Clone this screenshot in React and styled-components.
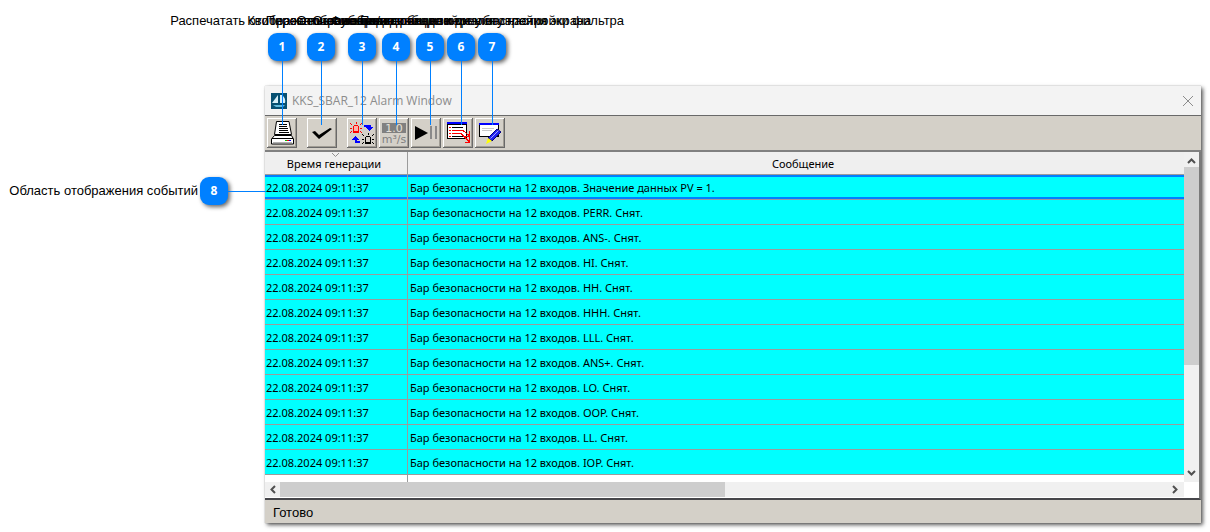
import React from 'react';
import styled, { createGlobalStyle, css } from 'styled-components';

const Global = createGlobalStyle`
  * { box-sizing: border-box; }
  body { margin: 0; background: #fff; color: #000; font-family: "Liberation Sans", Arial, sans-serif; }
`;

const Page = styled.main`
  position: relative;
  display: grid;
  grid-template-columns: 265px minmax(0, 1fr);
  padding: 86px 9px 9px 0;
`;

const Side = styled.aside`
  display: flex;
  align-items: center;
  align-self: start;
  justify-content: flex-end;
  gap: 2px;
  height: 28px;
  margin-top: 91px;
`;

const Caption = styled.span`
  font-size: 13px;
  line-height: 16px;
  white-space: nowrap;
`;

const Badge = styled.span`
  flex: none;
  width: 28px;
  height: 28px;
  border-radius: 9px;
  background: #0080ff;
  box-shadow: 2px 2px 4px rgba(0, 0, 0, 0.6);
  color: #fff;
  font: bold 12px/28px "Open Sans", sans-serif;
  text-align: center;
`;

const SideLine = styled.span`
  position: relative;
  z-index: 2;
  flex: none;
  width: 38px;
  height: 1px;
  margin: 0 -1px 0 -2px;
  background: #0080ff;
`;

const Pin = styled.div`
  position: absolute;
  z-index: 2;
  top: 13px;
  left: ${(p) => p.$x}px;
  width: 0;
  display: flex;
  flex-direction: column;
  align-items: center;
  pointer-events: none;
`;

const PinBadge = styled(Badge)`
  margin-top: 4px;
`;

const PinLine = styled.span`
  flex: none;
  width: 1px;
  height: 64px;
  margin-left: 1px;
  background: #0080ff;
`;

const Window = styled.section`
  display: flex;
  flex-direction: column;
  min-width: 0;
  background: #d4d0c8;
  box-shadow: 2px 2px 4px rgba(0, 0, 0, 0.65), 0 0 1px rgba(0, 0, 0, 0.3);
`;

const TitleBar = styled.header`
  display: flex;
  align-items: center;
  gap: 5px;
  height: 30px;
  padding: 0 6px;
  background: #f3f3f3;
  border-bottom: 1px solid #696969;
`;

const Title = styled.h1`
  flex: 1;
  margin: 0;
  font: 12px/16px "Open Sans", sans-serif;
  color: #8c8c8c;
`;

const CloseButton = styled.button`
  display: flex;
  padding: 0;
  border: 0;
  background: none;
`;

const Toolbar = styled.div`
  display: flex;
  gap: 10px;
  height: 36px;
  padding: 2px;
  border-bottom: 2px solid #808080;
`;

const Group = styled.div`
  display: flex;
  gap: 2px;
`;

const ToolButton = styled.button`
  width: 30px;
  height: 30px;
  padding: 0;
  border: 0;
  background: #d4d0c8;
  box-shadow: inset -1px -1px #696969, inset 1px 1px #fff, inset -2px -2px #a09c94;
  svg { display: block; }
`;

const Viewer = styled.div`
  display: grid;
  grid-template-columns: minmax(0, 1fr) 15px;
  padding-bottom: 1px;
  background: #fff;
  border-right: 2px solid #7a7a7a;
  border-bottom: 2px solid #46464a;
`;

const Table = styled.table`
  width: 100%;
  table-layout: fixed;
  border-collapse: separate;
  border-spacing: 0;
  font: 11px/16px "Noto Sans", sans-serif;
`;

const TimeCol = styled.col`
  width: 143px;
`;

const line = css`
  border-bottom: 1px solid #9b9b9b;
  &:first-child { border-right: 1px solid #9b9b9b; }
`;

const HeadCell = styled.th`
  ${line}
  position: relative;
  height: 23px;
  padding: 2px 4px 0 0;
  background: #efefef;
  font-weight: normal;
  &:last-child { padding: 2px 0 0 14px; }
`;

const SortMark = styled.svg`
  position: absolute;
  top: 0;
  left: 66px;
`;

const Cell = styled.td`
  ${line}
  height: 25px;
  padding: 1px 0 0 1px;
  background: #00ffff;
  white-space: nowrap;
  overflow: hidden;
  &:last-child { padding-left: 2px; }
  ${(p) => p.$selected && css`box-shadow: inset 0 2px #0080ff, inset 0 -2px #0080ff;`}
`;

const TailCell = styled.td`
  height: 7px;
  padding: 0;
  &:first-child { border-right: 1px solid #9b9b9b; }
`;

const VScroll = styled.div`
  display: flex;
  flex-direction: column;
  background: #f0f0f0;
`;

const HScroll = styled.div`
  display: flex;
  background: #f0f0f0;
`;

const Arrow = styled.button`
  display: flex;
  flex: none;
  width: 15px;
  height: 15px;
  padding: 0;
  border: 0;
  background: none;
`;

const Track = styled.div`
  display: flex;
  flex: 1;
  flex-direction: ${(p) => (p.$vertical ? 'column' : 'row')};
`;

const Thumb = styled.div`
  flex: 0 0 ${(p) => p.$size};
  background: #cdcdcd;
`;

const Status = styled.footer`
  height: 23px;
  padding-left: 8px;
  font-size: 13px;
  line-height: 26px;
`;

const Icon = ({ children }) => (
  <svg width="30" height="30" viewBox="0 0 30 30" shapeRendering="crispEdges" aria-hidden="true">{children}</svg>
);

const Printer = () => (
  <Icon>
    <path d="M9.500 3.500h12.500l2.500 13h-17z" fill="#fff" stroke="#000" shapeRendering="auto" />
    <path d="M12 6.500h8M12 8.500h8M12 10.500h9M12 12.500h9M12 14.500h10" stroke="#000" />
    <path d="M7.500 17.500l-3 3.500v5h22v-5l-2-3.500z" fill="#fff" stroke="#000" shapeRendering="auto" />
    <path d="M5 20.500h21" stroke="#000" />
    <path d="M6 24.500h19" stroke="#b0b0b0" />
    <path d="M18 22.500h2" stroke="#00c000" />
    <path d="M20 22.500h2" stroke="#f00000" />
    <path d="M22 22.500h2" stroke="#0000e0" />
  </Icon>
);

const Check = () => (
  <Icon>
    <path d="M5 14l3-1 4 4 11-7 2 1-13 10z" fill="#000" shapeRendering="auto" />
  </Icon>
);

const Lamp = ({ x, y, color, fill }) => (
  <g transform={`translate(${x} ${y})`} stroke={color} fill="none">
    <path d="M3.500 9.500v-5l1-1h3l1 1v5z" fill={fill} />
    <path d="M3 10.500h6M6 0v2M0 1.500h1M1 2.500h1M10 2.500h1M11 1.500h1M0 6.500h2M10 6.500h2M1 9.500h1M0 10.500h1M10 9.500h1M11 10.500h1" />
  </g>
);

const Swap = () => (
  <Icon>
    <Lamp x={3} y={4} color="#ff0000" fill="#ffb0a8" />
    <Lamp x={15} y={15} color="#000" fill="#d4d0c8" />
    <path d="M17 7.500h5.500V10M13 23.500H8.500V21" fill="none" stroke="#0000ff" strokeWidth="2" />
    <path d="M19 9h7l-3.500 4zM5 22h7l-3.500-4z" fill="#0000ff" />
  </Icon>
);

const UnitText = styled.text`
  font: 11px "DejaVu Sans", sans-serif;
`;

const Units = () => (
  <Icon>
    <rect x="3" y="5" width="24" height="10" fill="#808080" />
    <UnitText x="15" y="14" textAnchor="middle" fill="#e4e0d8">1.0</UnitText>
    <UnitText x="15" y="25" textAnchor="middle" fill="#808080">m³/s</UnitText>
  </Icon>
);

const PlayPause = () => (
  <Icon>
    <path d="M4 8l13 7-13 7z" fill="#000" shapeRendering="auto" />
    <path d="M19 8h2v13h-2zM24 8h2v13h-2z" fill="#8a8a8a" />
  </Icon>
);

const ListIcon = () => (
  <Icon>
    <rect x="4.500" y="6.500" width="19" height="14" fill="#fff" stroke="#000" />
    <path d="M4 4h20v2H4z" fill="#0000ff" />
    <path d="M6 9.500h2M6 12.500h2M6 15.500h2M6 18.500h2" stroke="#ff0000" />
    <path d="M9 9.500h11M9 18.500h11" stroke="#000" />
    <path d="M9 12.500h11l6 5M26.500 13v5h-5M9 15.500h9l8 8M26.500 19v5h-5" fill="none" stroke="#ff0000" />
  </Icon>
);

const EditIcon = () => (
  <Icon>
    <rect x="4.500" y="6.500" width="19" height="12" fill="#fff" stroke="#000" />
    <path d="M4 5h20v2H4z" fill="#0000ff" />
    <path d="M7 10.500h12M7 12.500h10" stroke="#c8c8c8" />
    <g shapeRendering="auto">
      <path d="M13 20l9-9 4 3-9 9z" fill="#2020f0" stroke="#000080" />
      <path d="M15.500 20.500l8-8" stroke="#a0a0ff" />
      <path d="M13 20l4 3-6 3z" fill="#ffff00" />
    </g>
  </Icon>
);

const Chevron = ({ d }) => (
  <svg width="15" height="15" aria-hidden="true"><path d={d} fill="none" stroke="#505050" strokeWidth="2" /></svg>
);

const pins = [
  [282, 'Распечатать отображаемые события'],
  [321, 'Квитировать сообщение'],
  [362, 'Переключение типа сообщений'],
  [396, 'Отображение единиц измерения'],
  [430, 'Остановка/возобновление обновления'],
  [461, 'Функция перехода к окну настройки экрана'],
  [492, 'Подключение к диалогу настройки фильтра'],
];

const groups = [
  [['Печать', Printer]],
  [['Квитировать', Check]],
  [['Переключить', Swap], ['Единицы', Units], ['Пауза', PlayPause], ['Список', ListIcon], ['Фильтр', EditIcon]],
];

const messages = [
  'Значение данных PV = 1.', 'PERR. Снят.', 'ANS-. Снят.', 'HI. Снят.', 'HH. Снят.', 'HHH. Снят.',
  'LLL. Снят.', 'ANS+. Снят.', 'LO. Снят.', 'OOP. Снят.', 'LL. Снят.', 'IOP. Снят.',
];

export default function App() {
  return (
    <Page>
      <Global />
      {pins.map(([x, text], i) => (
        <Pin key={x} $x={x}>
          <Caption>{text}</Caption>
          <PinBadge>{i + 1}</PinBadge>
          <PinLine />
        </Pin>
      ))}
      <Side>
        <Caption>Область отображения событий</Caption>
        <Badge>8</Badge>
        <SideLine />
      </Side>
      <Window>
        <TitleBar>
          <svg width="16" height="16" aria-hidden="true">
            <rect width="16" height="16" fill="#075072" />
            <path d="M7 2v8H1zM9 2h2q4 3 3 8H9z" fill="#d8f0f8" />
            <path d="M2 12h12l-2 2H5z" fill="#63bbdc" />
          </svg>
          <Title>KKS_SBAR_12 Alarm Window</Title>
          <CloseButton aria-label="Закрыть">
            <svg width="14" height="14"><path d="M2 2l10 10M12 2L2 12" stroke="#8c8c8c" /></svg>
          </CloseButton>
        </TitleBar>
        <Toolbar>
          {groups.map((group, i) => (
            <Group key={i}>
              {group.map(([label, Glyph]) => (
                <ToolButton key={label} aria-label={label}><Glyph /></ToolButton>
              ))}
            </Group>
          ))}
        </Toolbar>
        <Viewer>
          <Table>
            <colgroup><TimeCol /><col /></colgroup>
            <thead>
              <tr>
                <HeadCell>
                  <SortMark width="9" height="6"><path d="M1 1l3.500 3.500L8 1" fill="none" stroke="#909090" /></SortMark>
                  Время генерации
                </HeadCell>
                <HeadCell>Сообщение</HeadCell>
              </tr>
            </thead>
            <tbody>
              {messages.map((text, i) => (
                <tr key={text}>
                  <Cell $selected={i === 0}>22.08.2024 09:11:37</Cell>
                  <Cell $selected={i === 0}>Бар безопасности на 12 входов. {text}</Cell>
                </tr>
              ))}
              <tr><TailCell /><TailCell /></tr>
            </tbody>
          </Table>
          <VScroll>
            <Arrow aria-label="Вверх"><Chevron d="M4 11l3.500-3.500L11 11" /></Arrow>
            <Track $vertical><Thumb $size="66%" /></Track>
            <Arrow aria-label="Вниз"><Chevron d="M4 4l3.500 3.500L11 4" /></Arrow>
          </VScroll>
          <HScroll>
            <Arrow aria-label="Влево"><Chevron d="M10 4L6.500 7.500L10 11" /></Arrow>
            <Track><Thumb $size="50%" /></Track>
            <Arrow aria-label="Вправо"><Chevron d="M4 4l3.500 3.500L4 11" /></Arrow>
          </HScroll>
        </Viewer>
        <Status>Готово</Status>
      </Window>
    </Page>
  );
}
